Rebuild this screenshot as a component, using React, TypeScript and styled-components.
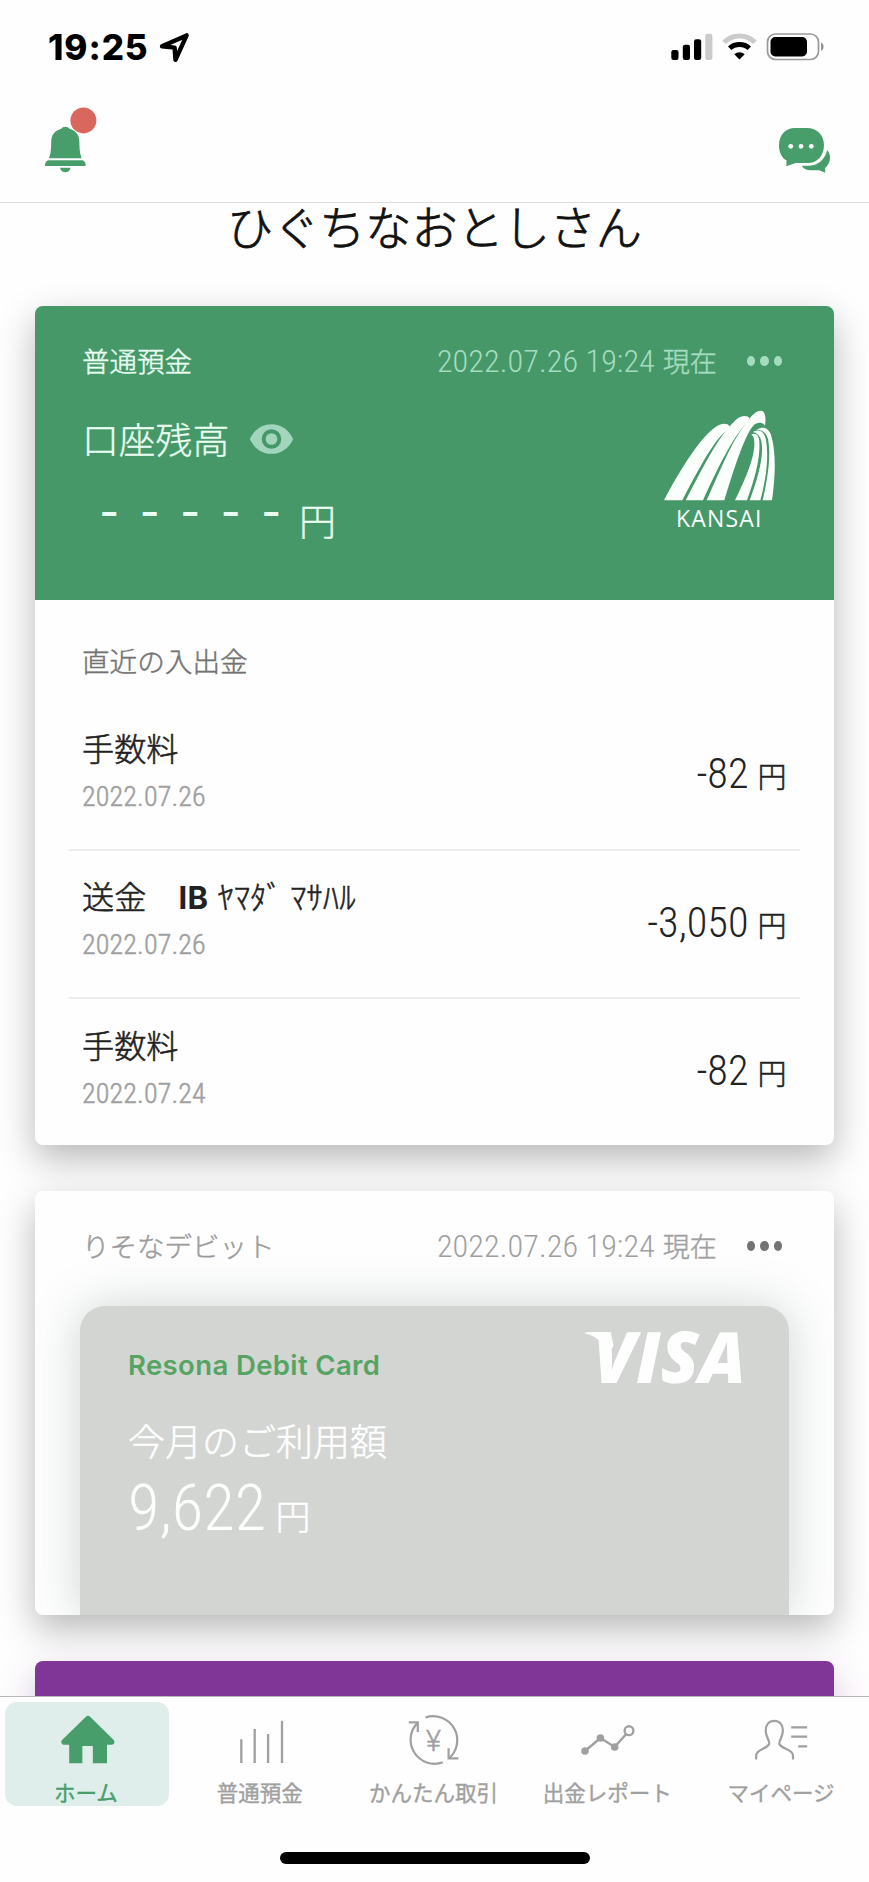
import React from 'react';
import styled, { createGlobalStyle, css } from 'styled-components';

const JP = `'Noto Sans CJK JP', sans-serif`;
const NUM = `Roboto, 'Noto Sans CJK JP', sans-serif`;
const UI = `Inter, 'Noto Sans CJK JP', sans-serif`;

const GREEN = '#469868';
const ICON_GREEN = '#489e6a';
const GRAY = '#a0a0a0';

const GlobalStyle = createGlobalStyle`
  * { box-sizing: border-box; }
  body { margin: 0; background: #fefefe; }
  svg { overflow: visible; }
`;

/* Light cut thickened slightly, between the light and the regular weight. */
const bookWeight = css`
  font-weight: 300;
  -webkit-text-stroke: 0.45px currentColor;
`;

const Screen = styled.div`
  width: 869px;
  height: 1882px;
  display: flex;
  flex-direction: column;
  overflow: hidden;
  background: #fefefe;
  font-family: ${JP};
  white-space: nowrap;
`;

const StatusBar = styled.div`
  height: 94px;
  flex: none;
  display: flex;
  justify-content: space-between;
  padding: 0 44px 0 48px;
`;

const ClockGroup = styled.div`
  display: flex;
  gap: 9px;
  padding-top: 31px;
`;

const Clock = styled.span`
  font: 800 35px/32px ${UI};
  letter-spacing: 0.9px;
  color: #000;
`;

const SignalGroup = styled.div`
  display: flex;
  gap: 9px;
  padding-top: 33px;
`;

const AppHeader = styled.header`
  height: 109px;
  flex: none;
  display: flex;
  justify-content: space-between;
  padding: 12px 37px 0 44px;
  border-bottom: 1px solid #dcdedd;
`;

const ChatButton = styled.div`
  padding-top: 21px;
`;

const Content = styled.main`
  flex: 1;
  min-height: 0;
  padding: 0 35px;
`;

const UserName = styled.h1`
  margin: 0;
  height: 103px;
  font: 300 46.1px/44px ${JP};
  -webkit-text-stroke: 0.8px currentColor;
  text-align: center;
  color: #111;
`;

const Card = styled.section<{ $height: number; $tone?: string; $shadow?: string }>`
  height: ${(p) => p.$height}px;
  margin-bottom: 46px;
  border-radius: 8px;
  background: ${(p) => p.$tone || '#fefefe'};
  box-shadow: 0 14px 36px ${(p) => p.$shadow || 'rgba(0, 0, 0, 0.28)'};
  display: flex;
  flex-direction: column;
  overflow: hidden;
`;

const AccountPanel = styled.div`
  height: 294px;
  flex: none;
  background: ${GREEN};
  color: #e9fff2;
`;

const CardHeader = styled.div<{ $color: string }>`
  display: flex;
  align-items: baseline;
  padding: 30px 52px 0 47px;
  line-height: 48px;
  color: ${(p) => p.$color};
`;

const CardTitle = styled.span`
  flex: 1;
  font-size: 27.5px;
  ${bookWeight}
`;

const Stamp = styled.span<{ $color: string }>`
  display: flex;
  align-items: baseline;
  gap: 8px;
  color: ${(p) => p.$color};
`;

const StampTime = styled.span`
  font: 300 32.2px/48px ${NUM};
  font-stretch: 75%;
  letter-spacing: 0.06px;
`;

const StampNote = styled.span`
  font-size: 27px;
  ${bookWeight}
`;

const More = styled.span<{ $color: string }>`
  display: flex;
  gap: 5px;
  align-self: center;
  margin-left: 30px;
  color: ${(p) => p.$color};
`;

const Dot = styled.i`
  width: 8.4px;
  height: 10px;
  border-radius: 50%;
  background: currentColor;
`;

const AccountBody = styled.div`
  display: flex;
  justify-content: space-between;
  padding: 22px 57px 0 47px;
`;

const BalanceHead = styled.div`
  display: flex;
  align-items: center;
  gap: 19.5px;
  margin-top: 3px;
  font: 300 36.8px/56px ${JP};
  -webkit-text-stroke: 0.35px currentColor;
`;

const EyeButton = styled.span`
  display: flex;
  padding-top: 2px;
`;

const Balance = styled.div`
  display: flex;
  align-items: baseline;
  margin: 26px 0 0 7px;
`;

const MaskDigit = styled.span`
  width: 40.5px;
  padding-bottom: 8px;
  text-align: center;
  font: 500 43px/56px ${UI};
`;

const Mask = styled.span`
  display: flex;
  align-self: flex-start;
  margin-top: -9px;
`;

const BigYen = styled.span`
  margin-left: 7.5px;
  font: 300 37px/56px ${JP};
  -webkit-text-stroke: 0.4px currentColor;
`;

const SectionTitle = styled.h2`
  margin: 39.5px 0 22.5px 47px;
  font: 300 27.6px/40px ${JP};
  -webkit-text-stroke: 0.45px currentColor;
  color: #737373;
`;

const Transactions = styled.ul`
  list-style: none;
  margin: 0 34px;
  padding: 0;
`;

const Transaction = styled.li`
  height: 148.5px;
  display: flex;
  justify-content: space-between;
  padding: 0 13.5px 0 13px;
  border-bottom: 2px solid #ececec;
  &:last-child {
    border-bottom: 0;
  }
`;

const TransactionInfo = styled.div`
  padding-top: 24.5px;
`;

const TransactionName = styled.div`
  height: 40px;
  font: 300 32.2px/40px ${JP};
  -webkit-text-stroke: 0.55px currentColor;
  color: #222;
  b {
    font: 700 31px/36px ${UI};
    letter-spacing: 0.3px;
    -webkit-text-stroke: 0;
  }
`;

const HalfKana = styled.span`
  margin-left: 2px;
  letter-spacing: 0.3px;
`;

const TransactionDate = styled.div`
  margin-top: 14px;
  font: 300 28px/32px ${NUM};
  font-stretch: 75%;
  -webkit-text-stroke: 0.5px currentColor;
  letter-spacing: 0.15px;
  color: #a0a0a0;
`;

const Amount = styled.div`
  display: flex;
  align-items: baseline;
  gap: 9px;
  padding-top: 42px;
  color: #222;
`;

const AmountValue = styled.span`
  font: 300 42.3px/60px ${NUM};
  font-stretch: 75%;
`;

const AmountUnit = styled.span`
  font: 300 29px/60px ${JP};
  -webkit-text-stroke: 0.5px currentColor;
`;

const DebitCard = styled.div`
  flex: 1;
  margin: 36px 45.5px 0 45px;
  padding-left: 48px;
  border-radius: 25px 25px 0 0;
  background: #d3d5d3;
  color: #fefefe;
  box-shadow: 0 0 48px rgba(80, 105, 98, 0.27);
`;

const DebitTop = styled.div`
  display: flex;
  justify-content: space-between;
  height: 110px;
  padding: 26px 44px 0 0;
`;

const DebitName = styled.span`
  margin-top: 15px;
  font: 600 27.5px/36px ${UI};
  letter-spacing: 0.38px;
  color: #56a463;
`;

const DebitLabel = styled.div`
  font: 300 37px/48px ${JP};
  -webkit-text-stroke: 0.45px currentColor;
`;

const DebitAmount = styled.div`
  display: flex;
  align-items: baseline;
  gap: 9.5px;
  margin-top: 6px;
`;

const DebitValue = styled.span`
  font: 300 64.6px/76px ${NUM};
  font-stretch: 75%;
`;

const DebitUnit = styled.span`
  font: 300 35px/76px ${JP};
  -webkit-text-stroke: 0.5px currentColor;
`;

const TabBar = styled.nav`
  height: 186px;
  flex: none;
  display: flex;
  flex-direction: column;
  align-items: center;
  border-top: 1px solid #b9b9b9;
  background: #fefefe;
  z-index: 1;
`;

const Tabs = styled.div`
  width: 100%;
  height: 155px;
  display: flex;
`;

const Tab = styled.div<{ $active?: boolean }>`
  flex: 1;
  height: 104px;
  margin: 5px;
  padding-top: 8px;
  display: flex;
  flex-direction: column;
  align-items: center;
  border-radius: 12px;
  color: ${GRAY};
  ${(p) =>
    p.$active &&
    css`
      background: #dfeeea;
      color: ${ICON_GREEN};
    `}
`;

const TabLabel = styled.span`
  margin: 8px 2px 0 0;
  font: 400 21.5px/28px ${JP};
  -webkit-text-stroke: 0.35px currentColor;
`;

const HomeIndicator = styled.div`
  width: 310px;
  height: 12px;
  border-radius: 6px;
  background: #000;
`;

const LocationIcon = () => (
  <svg width="32" height="32" viewBox="157 31 32 32" fill="none" stroke="#000" strokeWidth="4.4" strokeLinejoin="round">
    <path d="M161 46.3 L185.6 35.4 L174.5 59.8 L173.6 47.6 Z" />
  </svg>
);

const CellularIcon = () => (
  <svg width="42" height="28" viewBox="671 33 42 28">
    <rect x="671.3" y="50" width="7.2" height="10" rx="2.2" />
    <rect x="682.8" y="44.7" width="7.2" height="15.3" rx="2.2" />
    <rect x="694" y="39.3" width="7.2" height="20.7" rx="2.2" />
    <rect x="705.2" y="33.7" width="7.2" height="26.3" rx="2.2" fill="#cbcbcb" />
  </svg>
);

const WifiIcon = () => (
  <svg width="35" height="28" viewBox="721.5 33 35 28" fill="none" strokeWidth="5">
    <path d="M723.5 42.3 C732 33.8 746 33.8 754.5 42.3" stroke="#cbcbcb" />
    <path d="M729.2 48.3 C734.5 43.3 743.5 43.3 748.8 48.3" stroke="#000" />
    <path d="M739 59.6 L733.8 54.3 C736.8 51.4 741.2 51.4 744.2 54.3 Z" fill="#000" />
  </svg>
);

const BatteryIcon = () => (
  <svg width="59" height="28" viewBox="765.5 33 59 28">
    <rect x="767" y="34" width="51" height="25.5" rx="8" fill="none" stroke="#9a9a9a" strokeWidth="1.7" />
    <rect x="770" y="37" width="36.5" height="19.5" rx="4.8" />
    <path d="M820.6 42.4 C823.8 43.6 823.8 49.6 820.6 50.8 Z" fill="#8c8c8c" />
  </svg>
);

const BellIcon = () => (
  <svg width="54" height="68" viewBox="0 0 54 68" fill={ICON_GREEN}>
    <path d="M5 52.2 C7.5 46 7 40 7.3 34.5 C7.6 28 12 24.2 17.2 22.8 C18.6 20 24 20 25.4 22.8 C30.6 24.2 35 28 35.3 34.5 C35.6 40 35.1 46 37.6 52.2 Z" />
    <path d="M4 54.2 H38.7 C40.8 55 42 57.5 41.6 60 H1.1 C.7 57.5 1.9 55 4 54.2 Z" />
    <path d="M16 61.8 H26.6 C25.4 67.8 17.2 67.8 16 61.8 Z" />
    <circle cx="39.4" cy="14.4" r="13" fill="#da675d" />
  </svg>
);

const ChatIcon = () => (
  <svg width="54" height="48" viewBox="0 0 54 48" fill={ICON_GREEN}>
    <path d="M17 1 H29 C39 1 46 8 46 18 C46 28.5 39.5 36 30 36 H17.5 L8.3 39.2 L8.6 33.6 C4 31 1 25.5 1 18.5 C1 8 7.5 1 17 1 Z" />
    <path d="M49.2 23 C52 26.5 52.8 30.5 51.4 34.6 C50.5 37.3 48.9 39.5 47 41 L47.3 45.8 L41 43.3 H33 C28.8 43.3 25.4 41.6 23.7 38.7 H31.5 C40.5 38.4 46.8 32.5 49.2 23 Z" />
    <g fill="#fefefe">
      <circle cx="12.7" cy="19.3" r="2.4" />
      <circle cx="23" cy="19.3" r="2.4" />
      <circle cx="33.3" cy="19.3" r="2.4" />
    </g>
  </svg>
);

const EyeIcon = () => (
  <svg width="45" height="32" viewBox="0 0 46 32">
    <path d="M.8 16 C5.5 6 13.5 .8 23 .8 S40.5 6 45.2 16 C40.5 26 32.5 31.2 23 31.2 S5.5 26 .8 16 Z" fill="#a1d6bc" />
    <circle cx="23" cy="16" r="8" fill="none" stroke={GREEN} strokeWidth="4" />
  </svg>
);

const KansaiLogo = () => (
  <svg width="115" height="125" viewBox="36 22 345 375" fill="#fafffc">
    <path d="M42 302 C88 215 150 112 200 80 C213 71 232 69 239 80 L232 92 C195 115 145 210 97 302 Z" />
    <path d="M107 302 C155 210 205 108 258 60 C270 48 292 44 299 56 L292 68 C250 110 203 205 159 302 Z" />
    <path d="M170 302 C212 210 248 115 298 58 C312 38 330 28 340 36 C348 45 347 62 345 78 C338 66 324 68 314 74 C285 100 250 215 223 302 Z" />
    <path d="M255 302 C285 240 320 165 312 118 C311 111 308 107 304 105 C316 98 327 106 328 125 C332 180 310 250 291 302 Z" />
    <path d="M299 302 C322 240 343 170 334 125 C330 108 322 100 309 97 C325 88 342 92 348 120 C358 180 345 250 331 302 Z" />
    <path d="M338 302 C352 240 364 170 354 118 C349 99 338 92 321 90 C340 78 356 86 363 106 C380 160 375 240 366 302 Z" />
    <text x="78" y="383" fontFamily="'Open Sans', sans-serif" fontWeight="500" fontSize="69" textLength="256">
      KANSAI
    </text>
  </svg>
);

const VisaLogo = () => (
  <svg width="160" height="54" viewBox="0 0 160 54" fill="#fefefe">
    <path d="M0 .5 C8 0 17 0 22 .4 C26 1.5 27.500 6 28.500 14 L19 26 L14.500 10 C12 5 6 3 0 1.500 Z" />
    <text x="8" y="51" fontFamily="'Open Sans', sans-serif" fontStyle="italic" fontWeight="800" fontSize="71" textLength="153" lengthAdjust="spacingAndGlyphs">
      VISA
    </text>
  </svg>
);

const HomeIcon = () => (
  <svg width="60" height="60" viewBox="0 0 60 60" fill="currentColor">
    <path d="M31 9 L7.400 31.800 H54.400 Z" stroke="currentColor" strokeWidth="6" strokeLinejoin="round" />
    <path d="M12.200 30 H50 V53.300 H35.600 V36 H25.600 V53.300 H12.200 Z" />
    <path d="M25.600 36 H35.600 V53.300 H25.600 Z" fill="#dfeeea" />
  </svg>
);

const BarsIcon = () => (
  <svg width="60" height="60" viewBox="0 0 60 60" stroke="currentColor" strokeWidth="2.300">
    <path d="M10.300 29.300 V53 M23.700 19 V53 M37.100 24 V53 M51 10.700 V53" />
  </svg>
);

const ExchangeIcon = () => (
  <svg width="60" height="60" viewBox="0 0 60 60" fill="none" stroke="currentColor" strokeWidth="2.200">
    <path d="M21.500 7.500 A24 24 0 0 1 44.800 48.500" />
    <path d="M38.800 52.300 A24 24 0 0 1 13.800 12.600" />
    <path d="M4.800 12.300 H13.800 V21.900" />
    <path d="M54.400 48.300 H44.600 V38.300" />
    <text x="29.600" y="40.500" textAnchor="middle" fontFamily="Roboto, sans-serif" fontWeight="300" fontSize="29" fill="currentColor" strokeWidth="0.500">
      ¥
    </text>
  </svg>
);

const TrendIcon = () => (
  <svg width="60" height="60" viewBox="0 0 60 60" fill="currentColor" stroke="currentColor" strokeWidth="2.400">
    <path d="M7 41 L22.400 28 L36.700 37 L48 24.200" fill="none" />
    <g stroke="none">
      <circle cx="7" cy="41" r="3.800" />
      <circle cx="22.400" cy="28" r="3.800" />
      <circle cx="36.700" cy="37" r="3.800" />
    </g>
    <circle cx="51" cy="20.700" r="4.400" fill="none" />
  </svg>
);

const ProfileIcon = () => (
  <svg width="60" height="60" viewBox="0 0 60 60" fill="none" stroke="currentColor" strokeWidth="2.200">
    <path d="M4.200 49.500 V45.500 C4.200 39.500 13.500 39.500 17 34.500 C18.500 31.500 13.700 27 13.700 20.700 C13.700 14.500 17 10.800 22.300 10.800 S30.900 14.500 30.900 20.700 C30.900 27 26.100 31.500 27.600 34.500 C31.100 39.500 41 39.500 41 45.500 V49.500" />
    <path d="M39.200 17.300 H55.200 M39.200 26.700 H55.200 M46.200 36.300 H55.200" />
  </svg>
);

const MoreDots = ({ color }: { color: string }) => (
  <More $color={color}>
    <Dot />
    <Dot />
    <Dot />
  </More>
);

const transactions = [
  { name: <>手数料</>, date: '2022.07.26', amount: '-82' },
  {
    name: (
      <>
        送金　<b>IB</b> <HalfKana>ﾔﾏﾀﾞ ﾏｻﾊﾙ</HalfKana>
      </>
    ),
    date: '2022.07.26',
    amount: '-3,050',
  },
  { name: <>手数料</>, date: '2022.07.24', amount: '-82' },
];

const tabs = [
  { label: 'ホーム', Icon: HomeIcon, active: true },
  { label: '普通預金', Icon: BarsIcon },
  { label: 'かんたん取引', Icon: ExchangeIcon },
  { label: '出金レポート', Icon: TrendIcon },
  { label: 'マイページ', Icon: ProfileIcon },
];

export default function App() {
  return (
    <Screen lang="ja">
      <GlobalStyle />
      <StatusBar>
        <ClockGroup>
          <Clock>19:25</Clock>
          <LocationIcon />
        </ClockGroup>
        <SignalGroup>
          <CellularIcon />
          <WifiIcon />
          <BatteryIcon />
        </SignalGroup>
      </StatusBar>
      <AppHeader>
        <BellIcon />
        <ChatButton>
          <ChatIcon />
        </ChatButton>
      </AppHeader>

      <Content>
        <UserName>ひぐちなおとしさん</UserName>

        <Card $height={839}>
          <AccountPanel>
            <CardHeader $color="#e9fff2">
              <CardTitle>普通預金</CardTitle>
              <Stamp $color="#a5dcc0">
                <StampTime>2022.07.26 19:24</StampTime>
                <StampNote>現在</StampNote>
              </Stamp>
              <MoreDots color="#a5dcc0" />
            </CardHeader>
            <AccountBody>
              <div>
                <BalanceHead>
                  口座残高
                  <EyeButton>
                    <EyeIcon />
                  </EyeButton>
                </BalanceHead>
                <Balance>
                  <Mask>
                    {[0, 1, 2, 3, 4].map((i) => (
                      <MaskDigit key={i}>-</MaskDigit>
                    ))}
                  </Mask>
                  <BigYen>円</BigYen>
                </Balance>
              </div>
              <KansaiLogo />
            </AccountBody>
          </AccountPanel>
          <SectionTitle>直近の入出金</SectionTitle>
          <Transactions>
            {transactions.map((t, i) => (
              <Transaction key={i}>
                <TransactionInfo>
                  <TransactionName>{t.name}</TransactionName>
                  <TransactionDate>{t.date}</TransactionDate>
                </TransactionInfo>
                <Amount>
                  <AmountValue>{t.amount}</AmountValue>
                  <AmountUnit>円</AmountUnit>
                </Amount>
              </Transaction>
            ))}
          </Transactions>
        </Card>

        <Card $height={424}>
          <CardHeader $color="#9c9c9c">
            <CardTitle>りそなデビット</CardTitle>
            <Stamp $color="#a0a0a0">
              <StampTime>2022.07.26 19:24</StampTime>
              <StampNote>現在</StampNote>
            </Stamp>
            <MoreDots color="#737373" />
          </CardHeader>
          <DebitCard>
            <DebitTop>
              <DebitName>Resona Debit Card</DebitName>
              <VisaLogo />
            </DebitTop>
            <DebitLabel>今月のご利用額</DebitLabel>
            <DebitAmount>
              <DebitValue>9,622</DebitValue>
              <DebitUnit>円</DebitUnit>
            </DebitAmount>
          </DebitCard>
        </Card>

        <Card $height={294} $tone="#803696" $shadow="rgba(110, 40, 130, 0.27)" />
      </Content>

      <TabBar>
        <Tabs>
          {tabs.map(({ label, Icon, active }) => (
            <Tab key={label} $active={active}>
              <Icon />
              <TabLabel>{label}</TabLabel>
            </Tab>
          ))}
        </Tabs>
        <HomeIndicator />
      </TabBar>
    </Screen>
  );
}
